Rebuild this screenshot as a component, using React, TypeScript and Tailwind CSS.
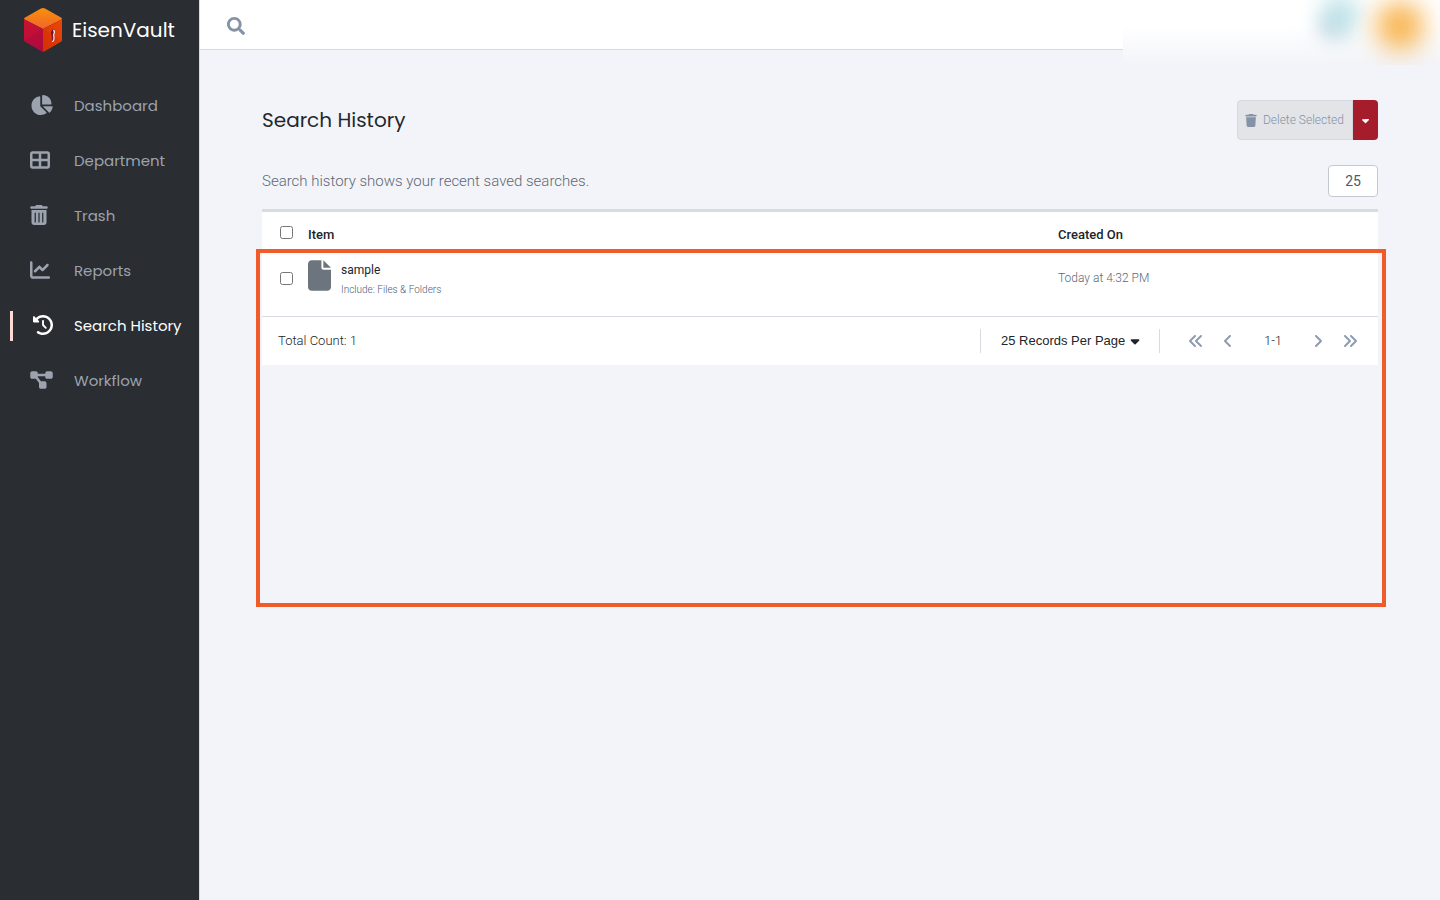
import { useState } from "react";
import { FaSearch } from "react-icons/fa";
import {
  FaAngleLeft,
  FaAngleRight,
  FaAnglesLeft,
  FaAnglesRight,
  FaCaretDown,
  FaChartLine,
  FaChartPie,
  FaClockRotateLeft,
  FaDiagramProject,
  FaFile,
  FaTableCellsLarge,
  FaTrash,
  FaTrashCan,
} from "react-icons/fa6";

const NAV_ITEMS = [
  { label: "Dashboard", icon: FaChartPie, size: "h-5 w-[23px]" },
  { label: "Department", icon: FaTableCellsLarge, size: "size-5" },
  { label: "Trash", icon: FaTrashCan, size: "h-5 w-[18px]" },
  { label: "Reports", icon: FaChartLine, size: "size-5" },
  { label: "Search History", icon: FaClockRotateLeft, size: "size-5" },
  { label: "Workflow", icon: FaDiagramProject, size: "h-5 w-[23px]" },
];

const SEARCHES = [
  { name: "sample", detail: "Include: Files & Folders", createdOn: "Today at 4:32 PM" },
];

function Logo() {
  return (
    <svg viewBox="0 0 38 44" className="h-11 w-[38px]" aria-hidden="true">
      <defs>
        <linearGradient id="cube-top" x1="0.5" y1="0" x2="0.5" y2="1">
          <stop offset="0" stopColor="#f79009" />
          <stop offset="1" stopColor="#f2642c" />
        </linearGradient>
        <linearGradient id="cube-left" x1="0.3" y1="0" x2="0.5" y2="1">
          <stop offset="0" stopColor="#c40f33" />
          <stop offset="1" stopColor="#ae0a3e" />
        </linearGradient>
        <linearGradient id="cube-right" x1="1" y1="0" x2="0" y2="1">
          <stop offset="0" stopColor="#e84708" />
          <stop offset="1" stopColor="#d93204" />
        </linearGradient>
      </defs>
      <path d="M17 .6q2-1 4 0l16 9q1 .6 1 1.600L19 21 0 11.200q0-1 1-1.600z" fill="url(#cube-top)" />
      <path d="M0 11.200L19 21v22.600q-1 0-2-.6L1 33.800q-1-.6-1-1.700z" fill="url(#cube-left)" />
      <path d="M38 11.200L19 21v22.600q1 0 2-.6l16-9.200q1-.6 1-1.700z" fill="url(#cube-right)" />
      <path d="M0 11.200L19 21 0 32z" fill="#d8202c" opacity="0.2" />
      <path d="M19 21l19 11.500L21 43q-1 .6-2 .6z" fill="#c92a00" opacity="0.2" />
      <path d="M28 22q3-2 3 1.500 0 2-1.200 3l.2 4.500q0 2.500-2 2.500l-.3-6q-1.700-3 .3-5.500z" fill="#7a1238" />
      <path d="M29.500 22q1.700 1.800.2 4.500l.3 4q0 2.500-1.800 3.200" fill="none" stroke="#fff" strokeWidth="1.1" />
    </svg>
  );
}

function Sidebar() {
  return (
    <aside className="w-50 shrink-0 border-r border-[#d9dbe0] bg-[#2a2d32]">
      <a href="#" className="flex h-[60px] items-center gap-2.5 pl-6 text-xl text-white">
        <Logo />
        EisenVault
      </a>
      <nav className="mt-[18px]">
        {NAV_ITEMS.map(({ label, icon: Icon, size }) => {
          const active = label === "Search History";
          return (
            <a
              key={label}
              href="#"
              aria-current={active ? "page" : undefined}
              className={`flex h-[55px] items-center pl-2.5 text-[15px] whitespace-nowrap ${
                active ? "text-white" : "text-[#9ca3af]"
              }`}
            >
              <span className={`h-[30px] w-[3px] ${active ? "bg-[#ffd9d4]" : ""}`} />
              <span className={`flex pb-0.5 ${active ? "ml-5 w-[41px]" : "ml-[17px] w-11"}`}>
                <Icon className={size} />
              </span>
              <span className="pt-0.5">{label}</span>
            </a>
          );
        })}
      </nav>
    </aside>
  );
}

function TopBar() {
  return (
    <header className="relative flex h-[50px] items-center border-b border-[#d9dbe0] bg-white pt-0.5 pl-[27px]">
      <button type="button" aria-label="Search" className="text-[#8492a6]">
        <FaSearch size={18} />
      </button>
      <div className="absolute top-0 right-0 h-[65px] w-[317px] overflow-hidden bg-linear-to-b from-white from-40% to-[#f3f4f9]">
        <div className="absolute top-3 right-[94px] size-7 rounded-full bg-[#dfe3ea] blur-[8px]" />
        <div className="absolute -top-1 right-[84px] h-10 w-8 rotate-12 rounded-full bg-[#b4dfe6] blur-[12px]" />
        <div className="absolute top-0.5 right-4 size-12 rounded-full bg-[#f8b450] blur-[13px]" />
      </div>
    </header>
  );
}

function HistoryTable() {
  return (
    <table className="w-full table-fixed text-left">
      <thead>
        <tr className="h-[41px] text-[13px] text-[#212529]">
          <th className="w-[46px] pl-[18px] font-normal">
            <input type="checkbox" aria-label="Select all" className="block size-[13px]" />
          </th>
          <th className="pt-1 font-medium">Item</th>
          <th className="w-80 pt-1 font-medium">Created On</th>
        </tr>
      </thead>
      <tbody>
        {SEARCHES.map((s) => (
          <tr key={s.name} className="h-[63px] border-b border-[#d8dbe0]">
            <td className="pb-3 pl-[18px]">
              <input type="checkbox" aria-label={`Select ${s.name}`} className="block size-[13px]" />
            </td>
            <td className="pb-2">
              <div className="flex items-start gap-2.5">
                <FaFile className="h-[31px] w-[23px] text-[#6c757d]" />
                <div>
                  <p className="text-xs leading-5 text-[#212529]">{s.name}</p>
                  <p className="text-[10px] leading-5 font-light text-[#4f5d73]">{s.detail}</p>
                </div>
              </div>
            </td>
            <td className="pb-3 text-xs font-light text-[#5c6873]">{s.createdOn}</td>
          </tr>
        ))}
      </tbody>
    </table>
  );
}

function Pagination() {
  const [perPage, setPerPage] = useState("25");
  return (
    <div className="flex h-12 items-center justify-end pr-5 pl-4 text-[13px] text-[#212529]">
      <p className="mr-auto font-light">Total Count: 1</p>
      <div className="relative flex h-6 items-center border-x border-[#d8dbe0] px-5">
        <select
          aria-label="Records per page"
          value={perPage}
          onChange={(e) => setPerPage(e.target.value)}
          className="appearance-none bg-transparent pr-[13px] font-['Liberation_Sans',sans-serif] text-[13px]"
        >
          <option value="25">25 Records Per Page</option>
          <option value="50">50 Records Per Page</option>
        </select>
        <FaCaretDown size={14} className="pointer-events-none absolute right-[17px]" />
      </div>
      <div className="ml-7 flex items-center text-[#8f9bb0]">
        <button type="button" aria-label="First page" className="flex w-4 justify-center">
          <FaAnglesLeft size={16} />
        </button>
        <button type="button" aria-label="Previous page" className="ml-4 flex w-4 justify-center">
          <FaAngleLeft size={16} />
        </button>
        <span className="w-[74px] text-center font-light text-[#212529]">1-1</span>
        <button type="button" aria-label="Next page" className="flex w-4 justify-center">
          <FaAngleRight size={16} />
        </button>
        <button type="button" aria-label="Last page" className="ml-4 flex w-4 justify-center">
          <FaAnglesRight size={16} />
        </button>
      </div>
    </div>
  );
}

export default function App() {
  return (
    <div className="flex min-h-screen bg-[#f3f4f9] font-[Poppins,Lato,sans-serif]">
      <Sidebar />
      <div className="min-w-0 flex-1">
        <TopBar />
        <main className="px-[62px] pt-[50px] font-[Roboto,sans-serif]">
          <div className="flex h-10 items-center justify-between">
            <h1 className="font-[Poppins,Lato,sans-serif] text-xl text-[#23282c]">Search History</h1>
            <div className="flex h-full">
              <button
                type="button"
                disabled
                className="flex items-center gap-1.5 rounded-l border border-[#d5d8de] bg-[#e3e4e8] pr-2 pl-[7px] text-xs font-light text-[#8492a6]"
              >
                <FaTrash className="h-[13px] w-3" />
                Delete Selected
              </button>
              <button
                type="button"
                aria-label="More delete options"
                className="flex w-[25px] items-center justify-center rounded-r bg-[#a51c2b] text-white"
              >
                <FaCaretDown size={11} />
              </button>
            </div>
          </div>

          <div className="mt-[25px] flex h-8 items-center justify-between">
            <p className="text-[15px] font-light text-[#5c6873]">
              Search history shows your recent saved searches.
            </p>
            <button
              type="button"
              className="h-8 w-[50px] rounded border border-[#c4c9d0] bg-white text-sm text-[#4a5a70]"
            >
              25
            </button>
          </div>

          <section className="relative mt-3" aria-label="Saved searches">
            <div className="border-t-3 border-[#d8dbe0] bg-white">
              <HistoryTable />
              <Pagination />
            </div>
            <div className="pointer-events-none absolute top-10 -right-2 -left-1.5 h-[358px] border-4 border-[#f15a29]" />
          </section>
        </main>
      </div>
    </div>
  );
}
